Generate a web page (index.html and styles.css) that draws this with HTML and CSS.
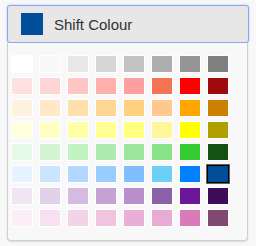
FILE: index.html
```html
<!DOCTYPE html>
<html lang="en">
<head>
  <meta charset="UTF-8" />
  <title>Shift Colour</title>
  <link rel="stylesheet" href="styles.css">
</head>
<body>
  <div class="picker">
    <button class="toggle" type="button">
      <span class="current"></span>
      <span class="label">Shift Colour</span>
    </button>
    <div class="panel">
      <div class="palette" id="palette"></div>
    </div>
  </div>

  <script>
    const COLOURS = [
      '#ffffff', '#f9f9f9', '#e8e8e8', '#d6d6d6', '#c2c2c2', '#adadad', '#959595', '#808080',
      '#ffe0e0', '#ffd4d4', '#ffc4c4', '#ffb0aa', '#ff9e9e', '#f47355', '#ff0000', '#9e0b0f',
      '#fff3e0', '#ffe9c8', '#ffe0ad', '#ffd794', '#ffd080', '#ffc891', '#ffa500', '#cc8000',
      '#ffffe0', '#ffffc4', '#ffffa8', '#ffff94', '#ffff80', '#fff59a', '#ffff00', '#afa000',
      '#e6f8e6', '#d4f5d4', '#c3f2c3', '#aeebae', '#9ce69c', '#88e288', '#33cc33', '#145214',
      '#e6f2ff', '#cce5ff', '#b3d8ff', '#99ccff', '#80bfff', '#6dcff6', '#0082ff', '#004d99',
      '#efe6f2', '#e1d1e8', '#d4bbdf', '#c5a2d3', '#b88ecc', '#8a62a8', '#6c1799', '#3f0c5b',
      '#fbeef7', '#f7e0f0', '#f3d3e6', '#efc4df', '#e8b0d6', '#e6acd4', '#da7ab9', '#804a70'
    ];
    const SELECTED = '#004d99';

    const palette = document.getElementById('palette');
    COLOURS.forEach(c => {
      const sw = document.createElement('span');
      sw.className = c === SELECTED ? 'swatch selected' : 'swatch';
      sw.style.background = c;
      palette.appendChild(sw);
    });
  </script>
</body>
</html>
```

FILE: styles.css
```css
* {
  margin: 0;
  padding: 0;
  box-sizing: border-box;
}
body {
  background: #f8f8f8;
  font-family: 'Liberation Sans', Arial, sans-serif;
  padding: 5px 7px;
}
.picker {
  width: 242px;
}
.toggle {
  display: flex;
  align-items: center;
  gap: 11px;
  width: 242px;
  height: 38px;
  padding-left: 13px;
  background: #e7e7e7;
  border: 1px solid #84abef;
  border-radius: 3px;
  box-shadow: 0 0 2px rgba(90, 140, 235, 0.6);
  font-family: inherit;
  font-size: 15px;
  color: #333;
  cursor: pointer;
}
.current {
  width: 22px;
  height: 22px;
  background: #004d99;
}
.panel {
  width: 241px;
  padding: 12px 0 13px 3px;
  background: #f8f8f8;
  border: 1px solid #cfcfcf;
  border-top: none;
  border-radius: 0 0 4px 4px;
  box-shadow: 0 1px 2px rgba(0, 0, 0, 0.12);
}
.palette {
  display: grid;
  grid-template-columns: repeat(8, 22px);
  column-gap: 6px;
  row-gap: 4px;
}
.swatch {
  height: 18px;
  border: 1px solid #fff;
}
.swatch.selected {
  border-color: #000;
  box-shadow: 0 0 0 1px rgba(0, 0, 0, 0.6);
}
```
